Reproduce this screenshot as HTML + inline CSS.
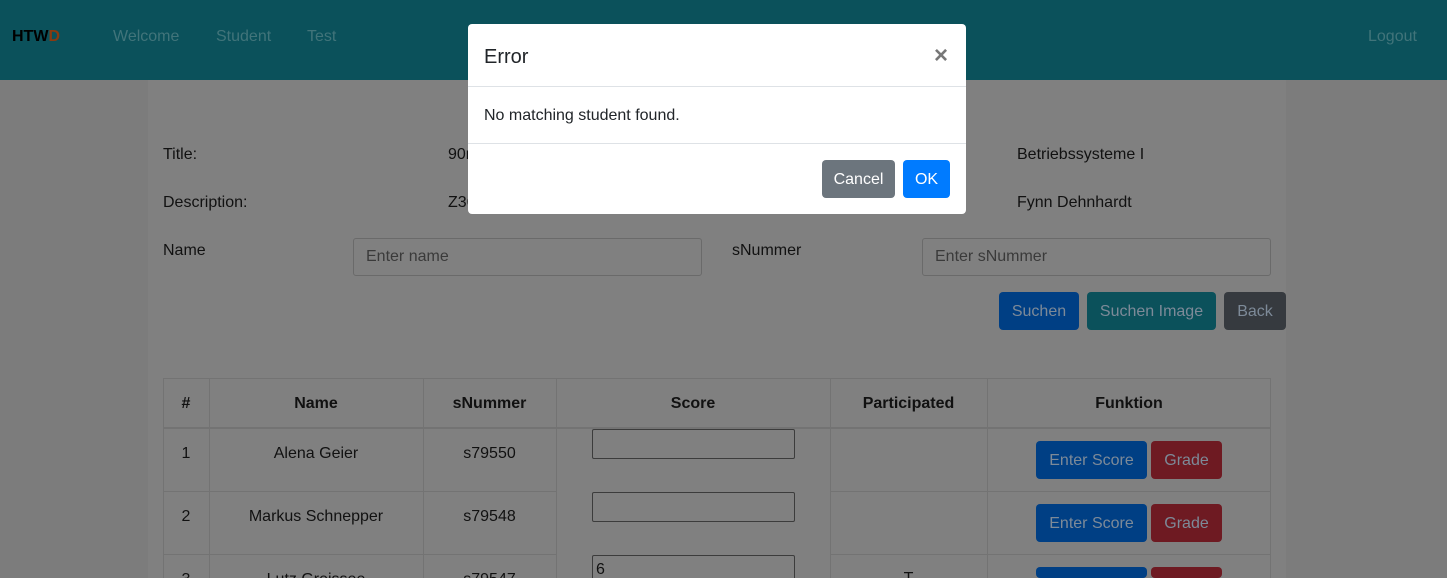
<!DOCTYPE html>
<html style="overflow:hidden;height:578px"><head><meta charset="utf-8"><style>
*{margin:0;padding:0;box-sizing:border-box}
body{width:1447px;height:578px;overflow:hidden;background:#7c7c7c;font-family:"Liberation Sans",Arial,sans-serif;font-size:16px;color:#111;position:relative}
.a{position:absolute;white-space:nowrap}
.nav{left:0;top:0;width:1447px;height:80px;background:#0b515b}
.nl{color:#41747a;top:28px}
.cont{left:148px;top:80px;width:1138px;height:498px;background:#808080}
.inp{border:1px solid #6a6a6a;border-radius:3px;height:38px;color:#3a3a3a;padding:9px 12px}
.btn{border-radius:4px;color:#7d8a98;text-align:center;line-height:39px;height:38px}
.vl{width:1px;background:#737373}
.hl{height:1px;background:#737373}
.c{text-align:center}
.si{border:1px solid #3c3c3c;border-radius:2px;width:203px;height:30px;left:592px}
.modal{left:468px;top:24px;width:498px;height:190px;background:#fff;border-radius:4px;font-family:"Liberation Sans","DejaVu Sans",sans-serif;color:#212529}
</style></head><body>
<div class="a nav"></div>
<div class="a" style="left:12px;top:28px;font-weight:bold;color:#000">HTW<span style="color:#8a3a10">D</span></div>
<div class="a nl" style="left:113px">Welcome</div>
<div class="a nl" style="left:216px">Student</div>
<div class="a nl" style="left:307px">Test</div>
<div class="a nl" style="left:1368px">Logout</div>
<div class="a cont"></div>
<div class="a" style="left:163px;top:146px">Title:</div>
<div class="a" style="left:448px;top:146px">90m</div>
<div class="a" style="left:1017px;top:146px">Betriebssysteme I</div>
<div class="a" style="left:163px;top:194px">Description:</div>
<div class="a" style="left:448px;top:194px">Z36</div>
<div class="a" style="left:1017px;top:194px">Fynn Dehnhardt</div>
<div class="a" style="left:163px;top:242px">Name</div>
<div class="a inp" style="left:353px;top:238px;width:349px">Enter name</div>
<div class="a" style="left:732px;top:242px">sNummer</div>
<div class="a inp" style="left:922px;top:238px;width:349px">Enter sNummer</div>
<div class="a btn" style="left:999px;top:292px;width:80px;background:#003f84">Suchen</div>
<div class="a btn" style="left:1087px;top:292px;width:129px;background:#0b515b">Suchen Image</div>
<div class="a btn" style="left:1224px;top:292px;width:62px;background:#363a3f">Back</div>
<div class="a hl" style="left:163px;top:378px;width:1108px"></div>
<div class="a" style="left:163px;top:427px;width:1108px;height:2px;background:#737373"></div>
<div class="a hl" style="left:163px;top:491px;width:393px"></div>
<div class="a hl" style="left:830px;top:491px;width:441px"></div>
<div class="a hl" style="left:163px;top:554px;width:393px"></div>
<div class="a hl" style="left:830px;top:554px;width:441px"></div>
<div class="a vl" style="left:163px;top:378px;height:200px"></div>
<div class="a vl" style="left:209px;top:378px;height:200px"></div>
<div class="a vl" style="left:423px;top:378px;height:200px"></div>
<div class="a vl" style="left:556px;top:378px;height:200px"></div>
<div class="a vl" style="left:830px;top:378px;height:200px"></div>
<div class="a vl" style="left:987px;top:378px;height:200px"></div>
<div class="a vl" style="left:1270px;top:378px;height:200px"></div>
<div class="a c" style="left:163px;width:46px;top:395px;font-weight:bold">#</div>
<div class="a c" style="left:209px;width:214px;top:395px;font-weight:bold">Name</div>
<div class="a c" style="left:423px;width:133px;top:395px;font-weight:bold">sNummer</div>
<div class="a c" style="left:556px;width:274px;top:395px;font-weight:bold">Score</div>
<div class="a c" style="left:830px;width:157px;top:395px;font-weight:bold">Participated</div>
<div class="a c" style="left:987px;width:284px;top:395px;font-weight:bold">Funktion</div>
<div class="a c" style="left:163px;width:46px;top:445px">1</div>
<div class="a c" style="left:209px;width:214px;top:445px">Alena Geier</div>
<div class="a c" style="left:423px;width:133px;top:445px">s79550</div>
<div class="a c" style="left:163px;width:46px;top:508px">2</div>
<div class="a c" style="left:209px;width:214px;top:508px">Markus Schnepper</div>
<div class="a c" style="left:423px;width:133px;top:508px">s79548</div>
<div class="a c" style="left:163px;width:46px;top:571px">3</div>
<div class="a c" style="left:209px;width:214px;top:571px">Lutz Greissee</div>
<div class="a c" style="left:423px;width:133px;top:571px">s79547</div>
<div class="a c" style="left:830px;width:157px;top:570px">T</div>
<div class="a si" style="top:429px"></div>
<div class="a si" style="top:492px"></div>
<div class="a si" style="top:555px;padding-left:3px;line-height:28px">6</div>
<div class="a btn" style="left:1036px;top:441px;width:111px;background:#003f84">Enter Score</div>
<div class="a btn" style="left:1151px;top:441px;width:71px;background:#6e1a22">Grade</div>
<div class="a btn" style="left:1036px;top:504px;width:111px;background:#003f84">Enter Score</div>
<div class="a btn" style="left:1151px;top:504px;width:71px;background:#6e1a22">Grade</div>
<div class="a btn" style="left:1036px;top:567px;width:111px;height:11px;background:#003f84"></div>
<div class="a btn" style="left:1151px;top:567px;width:71px;height:11px;background:#6e1a22"></div>
<div class="a modal">
 <div class="a" style="left:16px;top:22px;font-size:20px">Error</div>
 <div class="a" style="left:466px;top:18px;font-size:24px;color:#777;font-weight:bold">×</div>
 <div class="a" style="left:0;top:62px;width:498px;height:1px;background:#dee2e6"></div>
 <div class="a" style="left:16px;top:83px">No matching student found.</div>
 <div class="a" style="left:0;top:119px;width:498px;height:1px;background:#dee2e6"></div>
 <div class="a btn" style="left:354px;top:136px;width:73px;background:#6c757d;color:#fff">Cancel</div>
 <div class="a btn" style="left:435px;top:136px;width:47px;background:#007bff;color:#fff">OK</div>
</div>
</body></html>
